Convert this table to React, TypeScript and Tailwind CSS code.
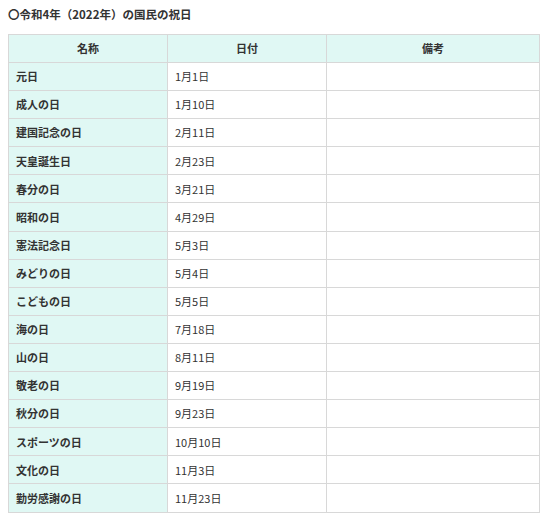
const holidays: [string, string][] = [
  ["元日", "1月1日"],
  ["成人の日", "1月10日"],
  ["建国記念の日", "2月11日"],
  ["天皇誕生日", "2月23日"],
  ["春分の日", "3月21日"],
  ["昭和の日", "4月29日"],
  ["憲法記念日", "5月3日"],
  ["みどりの日", "5月4日"],
  ["こどもの日", "5月5日"],
  ["海の日", "7月18日"],
  ["山の日", "8月11日"],
  ["敬老の日", "9月19日"],
  ["秋分の日", "9月23日"],
  ["スポーツの日", "10月10日"],
  ["文化の日", "11月3日"],
  ["勤労感謝の日", "11月23日"],
];

export default function App() {
  return (
    <div
      className="bg-white text-[#333] px-2 pt-[7px] w-[553px] h-[522px]"
      style={{ fontFamily: '"Noto Sans CJK JP", "Noto Sans", sans-serif' }}
    >
      <h2 className="text-[11.5px] font-bold leading-[14px] mb-[13px]">〇令和4年（2022年）の国民の祝日</h2>
      <table className="w-[532px] border-collapse text-[11px] table-fixed">
        <thead>
          <tr className="bg-[#e0f8f4] h-[28px]">
            <th className="w-[159px] border border-[#d8d8d8] font-bold text-center">名称</th>
            <th className="w-[159px] border border-[#d8d8d8] font-bold text-center">日付</th>
            <th className="border border-[#d8d8d8] font-bold text-center">備考</th>
          </tr>
        </thead>
        <tbody>
          {holidays.map(([name, date]) => (
            <tr key={name} className="h-[28.1px]">
              <td className="border border-[#d8d8d8] bg-[#e0f8f4] font-bold px-[7px]">{name}</td>
              <td className="border border-[#d8d8d8] px-[7px]">{date}</td>
              <td className="border border-[#d8d8d8]"></td>
            </tr>
          ))}
        </tbody>
      </table>
    </div>
  );
}
